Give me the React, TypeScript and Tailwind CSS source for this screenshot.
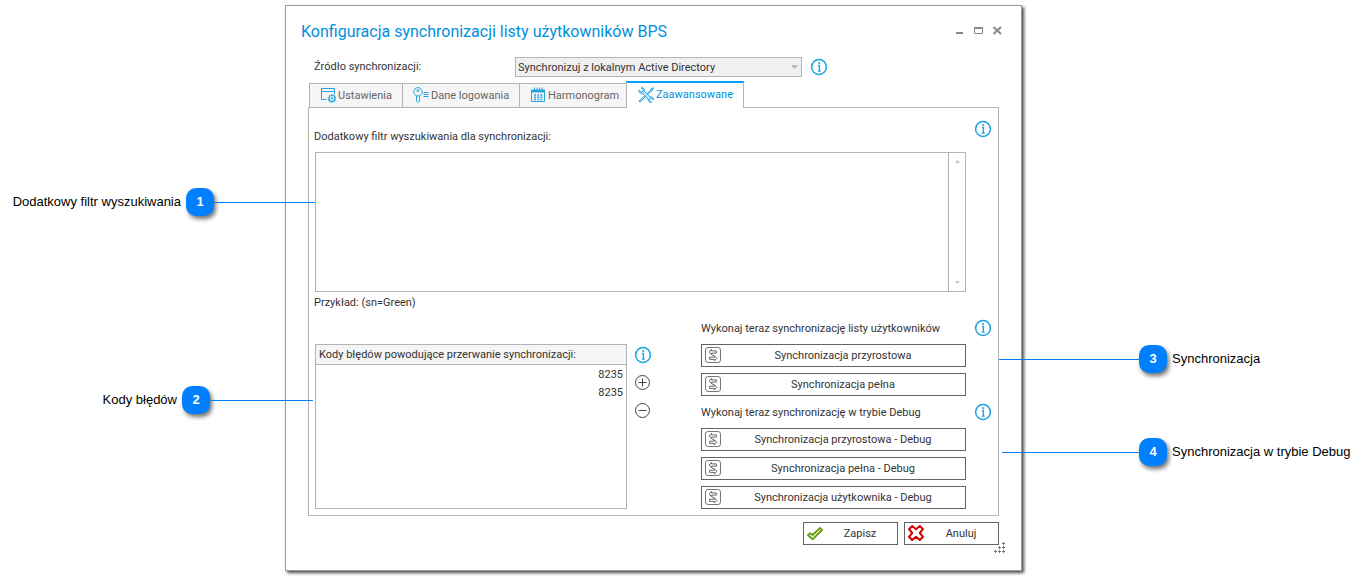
import React from "react";

type Side = "left" | "right";

function Callout({ n, text, side, className, line }: { n: number; text: string; side: Side; className: string; line: string }) {
  return (
    <div
      className={`absolute flex h-7 items-center whitespace-nowrap font-['Liberation_Sans',sans-serif] text-[13px] leading-4 text-black ${
        side === "left" ? "flex-row" : "flex-row-reverse"
      } ${className}`}
    >
      <span>{text}</span>
      <span className="mx-[5px] flex size-7 items-center justify-center rounded-[10px] bg-[#0080ff] font-bold text-white shadow-[2px_3px_4px_rgba(0,0,0,0.55)] data-[side=left]:mr-0 data-[side=right]:ml-0" data-side={side}>
        {n}
      </span>
      <span className={`h-px bg-[#0080ff] ${line}`} />
    </div>
  );
}

function InfoButton({ label }: { label: string }) {
  return (
    <button type="button" aria-label={label} className="size-4 shrink-0">
      <svg viewBox="0 0 16 16" className="size-4 overflow-visible" fill="none" stroke="#1ba1e2">
        <circle cx="8" cy="8" r="7.4" strokeWidth="1.5" />
        <path d="M7 6.5H8.3V12M6.8 12.2H9.8" strokeWidth="1.3" />
        <path d="M7.3 4.1H9.1" strokeWidth="1.7" />
      </svg>
    </button>
  );
}

function CircleButton({ plus, label }: { plus?: boolean; label: string }) {
  return (
    <button type="button" aria-label={label} className="size-4">
      <svg viewBox="0 0 16 16" className="size-4 overflow-visible" fill="none" stroke="#444" strokeWidth="1">
        <circle cx="7.5" cy="7.5" r="7" />
        <path d={plus ? "M3.5 7.5H11.5M7.5 3.5V11.5" : "M3.5 7.5H11.5"} />
      </svg>
    </button>
  );
}

function SyncButton({ children }: { children: string }) {
  return (
    <button type="button" className="mr-[25px] flex h-[23px] items-center border border-[#646464] bg-white pl-[3px]">
      <svg viewBox="0 0 16 16" className="mb-px size-4 shrink-0" fill="none" stroke="#444" strokeWidth="0.8">
        <rect x="0.5" y="0.5" width="15" height="15" rx="2.5" stroke="#777" strokeWidth="1" />
        <path d="M4.2 5L6.6 2.4V3.9H11.4V6.1H6.6V7.5ZM6.6 7.5L9.6 9.3" />
        <path d="M11.8 11.3L9.4 8.8V10.2H4.6V12.4H9.4V13.9Z" />
      </svg>
      <span className="flex-1 text-center">{children}</span>
    </button>
  );
}

const tabs = [
  {
    name: "Ustawienia",
    width: "w-[94px]",
    icon: (
      <>
        <path d="M6.5 12.5H1.5V1.5H14.5V7M1.5 4.5H14.5" />
        <circle cx="12" cy="11.5" r="3" strokeWidth="1.2" />
        <circle cx="12" cy="11.5" r="4" strokeDasharray="1.2 1.3" />
        <circle cx="12" cy="11.5" r="0.9" />
      </>
    ),
  },
  {
    name: "Dane logowania",
    width: "w-[118px]",
    icon: (
      <>
        <circle cx="5" cy="4.8" r="4.2" />
        <circle cx="5" cy="3.6" r="1.1" />
        <path d="M3.5 8.8V14L5 15.5L6.5 14V8.8M10.5 5.5H15.5M10.5 7.5H15.5M10.5 9.5H15.5" />
      </>
    ),
  },
  {
    name: "Harmonogram",
    width: "w-[108px]",
    icon: (
      <>
        <path d="M1.5 3V14.5H14.5V3M4.5 0.5V3M7 0.5V3M9.5 0.5V3M12 0.5V3" />
        <path d="M1 4H15" strokeWidth="3" />
        <path d="M4 8H12.4M4 10.2H12.4M4 12.4H12.4" strokeWidth="1.5" strokeDasharray="2 1.2" />
      </>
    ),
  },
];

export default function App() {
  return (
    <main className="flex pt-[5px] pr-[345px] pb-[9px] pl-[285px] font-[Roboto,sans-serif] text-[11px] leading-4 text-[#333]">
      <section className="min-w-0 flex-1 border border-[#999] bg-white px-[22px] shadow-[2px_2px_3px_rgba(0,0,0,0.7)]">
        <header className="-ml-[7px] flex h-[51px] items-center justify-between">
          <h1 className="text-[16px] leading-6 text-[#0090e0]">Konfiguracja synchronizacji listy użytkowników BPS</h1>
          <div className="-mr-1 flex gap-2 pb-[2px]">
            <button type="button" aria-label="Minimalizuj" className="size-[11px]">
              <svg viewBox="0 0 11 11" className="size-[11px]"><path d="M2 8H9" stroke="#888" strokeWidth="2" /></svg>
            </button>
            <button type="button" aria-label="Maksymalizuj" className="size-[11px]">
              <svg viewBox="0 0 11 11" className="size-[11px]"><path d="M1.5 2V8.5H9.5V2" fill="none" stroke="#888" /><path d="M1 3H10" stroke="#888" strokeWidth="2" /></svg>
            </button>
            <button type="button" aria-label="Zamknij" className="size-[11px]">
              <svg viewBox="0 0 11 11" className="size-[11px]"><path d="M1.5 2L9 9M9 2L1.5 9" stroke="#888" strokeWidth="1.9" /></svg>
            </button>
          </div>
        </header>

        <div className="flex h-5 items-center pl-[6px]">
          <label htmlFor="source" className="w-[201px]">Źródło synchronizacji:</label>
          <div className="relative h-5 w-[287px]">
            <select id="source" className="h-5 w-full appearance-none border border-[#b4b4b4] bg-[#f0f0f0] pt-px pl-[2px] text-[11px] leading-4">
              <option>Synchronizuj z lokalnym Active Directory</option>
            </select>
            <svg viewBox="0 0 7 4" className="pointer-events-none absolute top-2 right-1 h-1 w-[7px]" fill="#b8b8b8"><path d="M0 0H7L3.5 4Z" /></svg>
          </div>
          <div className="ml-[9px] flex"><InfoButton label="Informacje o źródle" /></div>
        </div>

        <div role="tablist" className="relative z-10 -mb-px flex items-end pt-1 pl-[1px]">
          {tabs.map((t) => (
            <button key={t.name} role="tab" type="button" aria-selected="false" className={`-mr-px flex h-[25px] items-center border border-[#b4b4b4] bg-[#f5f5f5] pl-[10px] text-[#666] ${t.width}`}>
              <svg viewBox="0 0 16 16" className="mr-[2px] mb-px size-4 shrink-0" fill="none" stroke="#29a3e0">{t.icon}</svg>
              <span className="whitespace-nowrap">{t.name}</span>
            </button>
          ))}
          <button role="tab" type="button" aria-selected="true" className="flex h-[27px] w-[118px] items-center border-x border-t-2 border-x-[#b4b4b4] border-t-[#00a0ff] bg-white pb-px pl-[11px] text-[#0090e0]">
            <svg viewBox="0 0 16 16" className="mr-[2px] size-4 shrink-0 overflow-visible" fill="#c4e7f8" stroke="#29a3e0">
              <path d="M15.4.8L12.8 2 12.4 3.6 1 14 2 15.2 13 4.2 14.4 3.4Z" />
              <path d="M3 .8L5.2 2.8 5 4.6 3.2 5 1 3C.4 5 2 7 4.4 6.4L10.2 12C9.8 14.4 11.6 16 13.6 15.2L11.6 13.2 12 11.6 13.6 11.2 15.4 13C16 11 14.6 9.4 12 9.8L6.4 4.2C6.8 2 5 .2 3 .8Z" />
            </svg>
            <span>Zaawansowane</span>
          </button>
        </div>

        <div role="tabpanel" className="flex flex-col border border-[#b4b4b4] pt-[13px] pr-[7px] pb-[6px] pl-[6px]">
          <div className="flex items-start justify-between">
            <label htmlFor="filter" className="-ml-px pt-2">Dodatkowy filtr wyszukiwania dla synchronizacji:</label>
            <InfoButton label="Informacje o filtrze" />
          </div>
          <div className="relative mt-[7px] mr-[25px] flex h-[140px] border border-[#b4b4b4]">
            <textarea id="filter" className="min-w-0 flex-1 resize-none p-1 outline-none" />
            <div className="flex w-[17px] flex-col items-center justify-between border-l border-[#b4b4b4] py-[7px]">
              <svg viewBox="0 0 5 3" className="h-[3px] w-[5px]" fill="#c4c4c4"><path d="M0 3H5L2.5 0Z" /></svg>
              <svg viewBox="0 0 5 3" className="h-[3px] w-[5px]" fill="#c4c4c4"><path d="M0 0H5L2.5 3Z" /></svg>
            </div>
            <Callout n={1} side="left" text="Dodatkowy filtr wyszukiwania" className="top-[35px] right-full mr-px" line="w-[101px]" />
          </div>
          <p className="mt-[3px] -ml-px">Przykład: (sn=Green)</p>

          <div className="mt-[9px] flex">
            <div className="relative mt-6 flex-1 border border-[#b4b4b4]">
              <table className="w-full border-separate border-spacing-0">
                <thead>
                  <tr><th className="h-5 border-b border-[#b4b4b4] bg-[#f5f5f5] p-0 pt-px pl-[3px] text-left font-normal">Kody błędów powodujące przerwanie synchronizacji:</th></tr>
                </thead>
                <tbody>
                  <tr><td className="h-[18px] p-0 pt-[2px] pr-[3px] text-right">8235</td></tr>
                  <tr><td className="h-[18px] p-0 pt-[2px] pr-[3px] text-right">8235</td></tr>
                </tbody>
              </table>
              <Callout n={2} side="left" text="Kody błędów" className="top-[41px] right-full mr-[3px]" line="w-[103px]" />
            </div>
            <div className="mt-[27px] mr-[50px] ml-2 flex w-4 flex-col gap-3">
              <InfoButton label="Informacje o kodach błędów" />
              <CircleButton plus label="Dodaj kod" />
              <CircleButton label="Usuń kod" />
            </div>
            <div className="relative flex w-[290px] flex-col gap-2">
              <div className="flex items-center justify-between">
                <span className="h-4 pt-px">Wykonaj teraz synchronizację listy użytkowników</span>
                <InfoButton label="Informacje o synchronizacji" />
              </div>
              <div className="flex flex-col gap-[6px]">
                <SyncButton>Synchronizacja przyrostowa</SyncButton>
                <SyncButton>Synchronizacja pełna</SyncButton>
              </div>
              <div className="flex items-center justify-between">
                <span className="h-4 pt-px">Wykonaj teraz synchronizację w trybie Debug</span>
                <InfoButton label="Informacje o trybie Debug" />
              </div>
              <div className="flex flex-col gap-[6px]">
                <SyncButton>Synchronizacja przyrostowa - Debug</SyncButton>
                <SyncButton>Synchronizacja pełna - Debug</SyncButton>
                <SyncButton>Synchronizacja użytkownika - Debug</SyncButton>
              </div>
              <Callout n={3} side="right" text="Synchronizacja" className="top-[25px] left-full ml-2" line="w-[140px]" />
              <Callout n={4} side="right" text="Synchronizacja w trybie Debug" className="top-[118px] left-full ml-[11px]" line="w-[137px]" />
            </div>
          </div>
        </div>

        <footer className="relative flex justify-end gap-[6px] pt-[6px] pb-[25px]">
          <button type="button" className="flex h-[23px] w-[95px] items-center border border-[#646464] bg-white pl-[3px]">
            <svg viewBox="0 0 16 16" className="size-4 shrink-0" fill="none" stroke="#6a9e0c" strokeWidth="1.9" strokeLinejoin="round">
              <path d="M1 9.2L3 7.2 5.6 9 13 2 15 4 5.8 13.2Z" />
            </svg>
            <span className="flex-1 pt-px text-center">Zapisz</span>
          </button>
          <button type="button" className="flex h-[23px] w-[95px] items-center border border-[#646464] bg-white pl-[3px]">
            <svg viewBox="0 0 16 16" className="mb-px size-4 shrink-0" fill="none" stroke="#d40000" strokeWidth="2" strokeLinejoin="round">
              <path d="M4.2 1L8 4.2 11.8 1 15 4.2 11.8 8 15 11.8 11.8 15 8 11.8 4.2 15 1 11.8 4.2 8 1 4.2Z" />
            </svg>
            <span className="flex-1 pt-px text-center">Anuluj</span>
          </button>
          <svg viewBox="0 0 12 12" className="absolute -right-[7px] bottom-4 size-3" stroke="#777" strokeWidth="1">
            <path d="M8 1.5h3M9.5 0v3M4 5.5h3M5.5 4v3M8 5.5h3M9.5 4v3M0 9.5h3M1.5 8v3M4 9.5h3M5.5 8v3M8 9.5h3M9.5 8v3" />
          </svg>
        </footer>
      </section>
    </main>
  );
}
